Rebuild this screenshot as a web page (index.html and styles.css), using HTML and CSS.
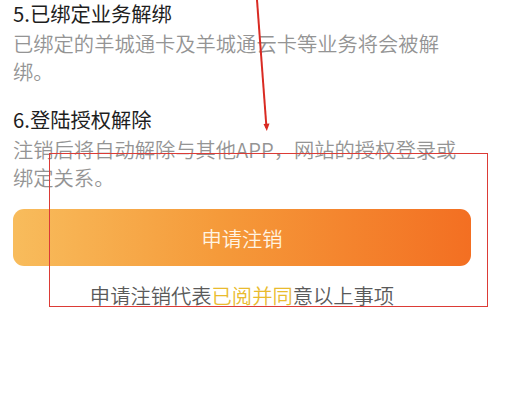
FILE: index.html
```
<!DOCTYPE html>
<html lang="zh-CN">
<head>
<meta charset="utf-8">
<title>注销须知</title>
<link rel="stylesheet" href="styles.css">
</head>
<body>
<div class="page">
  <section class="item">
    <h3 class="item-title">5.已绑定业务解绑</h3>
    <p class="item-desc">已绑定的羊城通卡及羊城通云卡等业务将会被解<br>绑。</p>
  </section>
  <section class="item">
    <h3 class="item-title">6.登陆授权解除</h3>
    <p class="item-desc">注销后将自动解除与其他APP，网站的授权登录或<br>绑定关系。</p>
  </section>
  <button class="apply-btn" type="button">申请注销</button>
  <p class="agree">申请注销代表<span class="hl">已阅并同</span>意以上事项</p>
</div>
<div class="mark-box"></div>
<svg class="mark-arrow" width="511" height="140" viewBox="0 0 511 140">
  <line x1="257" y1="0" x2="266.5" y2="128" stroke="#d92a22" stroke-width="2"/>
  <path d="M263.5 124 L266.8 131 L269.5 123.5 Z" fill="#d92a22"/>
</svg>
</body>
</html>
```
FILE: styles.css
```
html, body {
  margin: 0;
  padding: 0;
  background: #ffffff;
}
body {
  width: 511px;
  height: 404px;
  overflow: hidden;
  position: relative;
  font-family: "Noto Sans CJK SC", "Noto Sans", sans-serif;
}
.page {
  padding: 1px 30px 0 13px;
  display: flex;
  flex-direction: column;
}
.item {
  display: flex;
  flex-direction: column;
  gap: 4px;
}
.item + .item {
  margin-top: 22px;
}
.item-title {
  margin: 0;
  font-size: 20.3px;
  line-height: 24px;
  font-weight: 400;
  color: #1e1e1e;
}
.item-desc {
  margin: 0;
  font-size: 20.3px;
  line-height: 28px;
  font-weight: 350;
  color: #949494;
  white-space: nowrap;
}
.apply-btn {
  margin-top: 18px;
  width: 458px;
  height: 57px;
  border: none;
  border-radius: 11px;
  background: linear-gradient(90deg, #f8bc5c 0%, #f59a3a 45%, #f36f22 100%);
  color: #fff4e2;
  font-family: inherit;
  font-size: 20.3px;
  font-weight: 350;
  padding: 0;
}
.agree {
  margin: 15px 0 0;
  width: 458px;
  text-align: center;
  font-size: 20.3px;
  line-height: 28px;
  font-weight: 350;
  color: #5a5a5a;
}
.hl {
  color: #e9bb2e;
}
.mark-box {
  position: absolute;
  left: 49px;
  top: 153px;
  width: 437px;
  height: 152px;
  border: 1.5px solid #dc3b36;
}
.mark-arrow {
  position: absolute;
  left: 0;
  top: 0;
}
```
